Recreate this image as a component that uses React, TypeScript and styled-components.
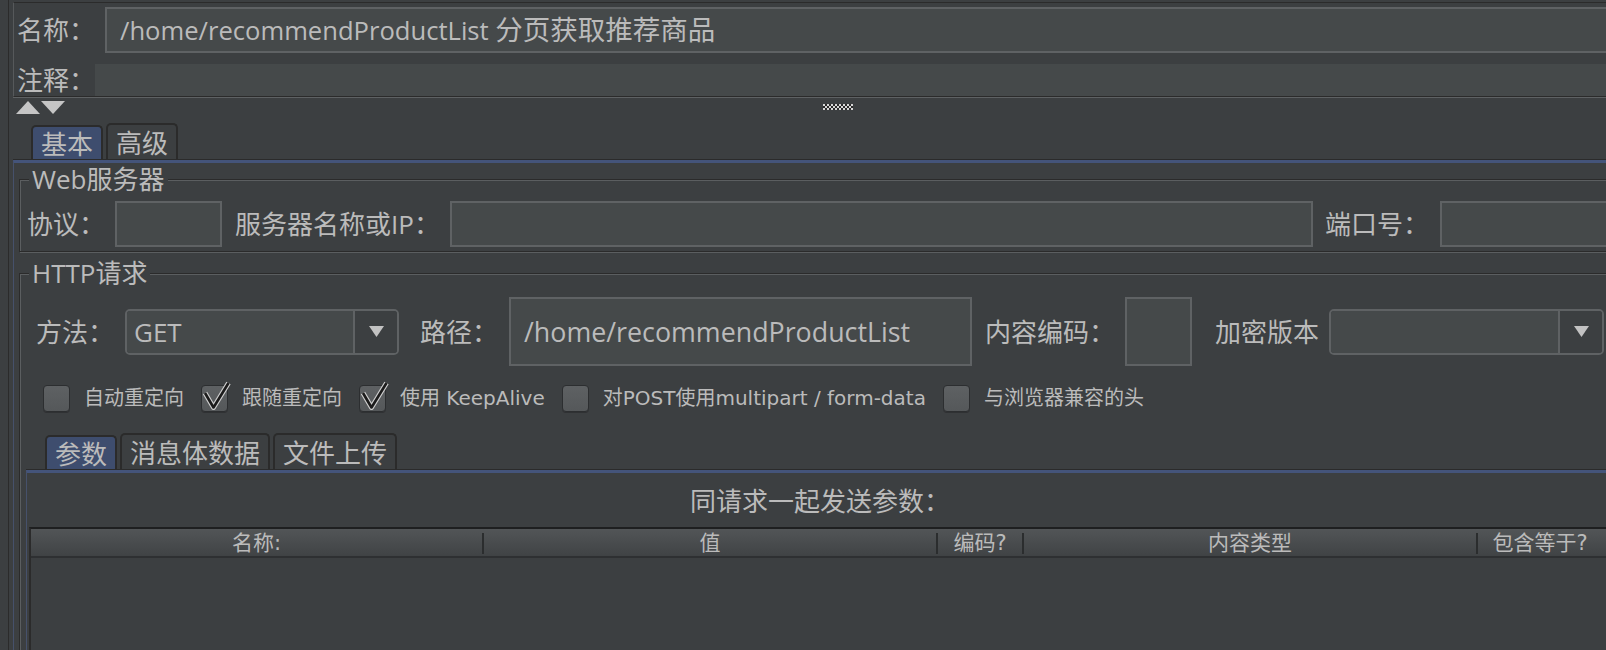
import styled, { createGlobalStyle } from "styled-components";

const GlobalStyle = createGlobalStyle`
  * { box-sizing: border-box; }
  html, body { margin: 0; padding: 0; background: #3c3f41; overflow: hidden; }
  body {
    font-family: "Open Sans", "Noto Sans CJK SC", sans-serif;
    font-size: 26px;
    line-height: 30px;
    color: #bbbbbb;
  }
`;

const Page = styled.div`
  display: flex;
  width: 1606px;
  height: 650px;
  overflow: hidden;
  background: #3c3f41;
`;

const Gutter = styled.div`
  flex: none;
  width: 9px;
  border-right: 1px solid #2b2b2b;
`;

const Main = styled.div`
  flex: none;
  width: 1640px;
  padding-left: 4px;
  display: flex;
  flex-direction: column;
`;

const Header = styled.div`
  margin-top: 2px;
  padding: 4px 0 0 3px;
  border-top: 1px solid #2b2b2b;
  border-left: 1px solid #56595b;
  border-bottom: 1px solid #2b2b2b;
  box-shadow: 0 1px 0 #5e6163;
`;

const Row = styled.div<{ $h: number; $top?: number; $left?: number }>`
  display: flex;
  align-items: center;
  height: ${(p) => p.$h}px;
  margin-top: ${(p) => p.$top ?? 0}px;
  padding-left: ${(p) => p.$left ?? 0}px;
  flex: none;
`;

const Label = styled.span<{ $gap?: number }>`
  flex: none;
  margin-right: ${(p) => p.$gap ?? 10}px;
  white-space: nowrap;
`;

const TextBox = styled.div<{ $w?: number; $h: number; $flat?: boolean; $next?: number; $size?: number }>`
  flex: ${(p) => (p.$w ? "none" : "1")};
  width: ${(p) => (p.$w ? `${p.$w}px` : "auto")};
  height: ${(p) => p.$h}px;
  margin-right: ${(p) => p.$next ?? 0}px;
  padding: 0 ${(p) => (p.$flat ? 0 : 13)}px;
  display: flex;
  align-items: center;
  background: #45494a;
  border: ${(p) => (p.$flat ? "none" : "2px solid #5f6264")};
  font-size: ${(p) => p.$size ?? 26}px;
  white-space: nowrap;
`;

const Wide = styled.span`
  font-size: 27.5px;
`;

const SplitBar = styled.div`
  flex: none;
  display: flex;
  align-items: flex-start;
  height: 24px;
  padding: 4px 0 0 3px;
`;

const Grip = styled.svg`
  margin: 3px 0 0 757px;
`;

const TabStrip = styled.div<{ $h: number; $left: number; $top?: number }>`
  flex: none;
  display: flex;
  align-items: flex-end;
  gap: 3px;
  height: ${(p) => p.$h}px;
  margin-top: ${(p) => p.$top ?? 0}px;
  padding-left: ${(p) => p.$left}px;
`;

const Tab = styled.div<{ $active?: boolean }>`
  height: ${(p) => (p.$active ? 35 : 37)}px;
  padding: 0 8px;
  display: flex;
  align-items: center;
  border: 2px solid #2b2b2b;
  border-bottom: none;
  border-radius: 5px 5px 0 0;
  background: ${(p) => (p.$active ? "#3e4d6e" : "#3c3f41")};
  white-space: nowrap;
`;

const TabPanel = styled.div<{ $left?: number }>`
  flex: 1;
  display: flex;
  flex-direction: column;
  margin-left: ${(p) => p.$left ?? 0}px;
  border-top: 3px solid #44547a;
  border-left: 1px solid #46516b;
  box-shadow: 0 -1px 0 #2b2b2b;
`;

const Group = styled.section<{ $top: number; $grow?: boolean }>`
  margin: ${(p) => p.$top}px 0 0 5px;
  padding-bottom: 4px;
  border: 1px solid #2b2b2b;
  border-right: none;
  box-shadow: inset 1px 1px 0 #5b5e60, 1px 1px 0 #5b5e60;
  display: flex;
  flex-direction: column;
  flex: ${(p) => (p.$grow ? "1" : "none")};
`;

const Legend = styled.div`
  width: fit-content;
  margin: -16px 0 0 9px;
  padding: 0 3px;
  background: #3c3f41;
  line-height: 30px;
`;

const Select = styled.div<{ $w: number; $next?: number }>`
  flex: none;
  display: flex;
  width: ${(p) => p.$w}px;
  height: 46px;
  margin-right: ${(p) => p.$next ?? 0}px;
  border: 2px solid #5f6264;
  border-radius: 5px;
  overflow: hidden;
`;

const SelectValue = styled.div`
  flex: 1;
  display: flex;
  align-items: center;
  padding-left: 7px;
  background: #45494a;
`;

const SelectButton = styled.div`
  flex: none;
  width: 44px;
  display: flex;
  align-items: center;
  justify-content: center;
  border-left: 2px solid #5f6264;
  background: #3c3f41;
`;

const CheckItem = styled.label`
  display: flex;
  align-items: center;
  margin-right: 17px;
  font-family: "DejaVu Sans", "Noto Sans CJK SC", sans-serif;
  font-size: 20px;
  white-space: nowrap;
`;

const Box = styled.span`
  position: relative;
  flex: none;
  width: 27px;
  height: 27px;
  margin-right: 14px;
  border-radius: 4px;
  border: 1px solid #2c2e30;
  background: linear-gradient(#5e6163, #55585a);
  box-shadow: 0 1px 0 #2f3133;
`;

const Tick = styled.svg`
  position: absolute;
  left: -1px;
  top: -7px;
`;

const Caption = styled.div`
  flex: none;
  height: 54px;
  padding: 2px 36px 0 0;
  line-height: 52px;
  text-align: center;
  white-space: nowrap;
`;

const Table = styled.div`
  flex: 1;
  margin-left: 2px;
  border-top: 2px solid #1e1f20;
  border-left: 2px solid #2b2b2b;
  min-height: 200px;
`;

const HeadRow = styled.div`
  display: flex;
  height: 29px;
  border-bottom: 2px solid #2e3032;
  background: linear-gradient(#525557, #404345);
  font-family: "DejaVu Sans", "Noto Sans CJK SC", sans-serif;
  font-size: 21px;
`;

const HeadCell = styled.div<{ $w: number; $last?: boolean }>`
  flex: none;
  width: ${(p) => p.$w}px;
  margin: 4px 0 2px;
  line-height: 21px;
  text-align: center;
  border-right: ${(p) => (p.$last ? "none" : "2px solid #2b2d2e")};
  white-space: nowrap;
`;

const columns = [
  { title: "名称:", w: 453 },
  { title: "值", w: 454 },
  { title: "编码?", w: 86 },
  { title: "内容类型", w: 454 },
  { title: "包含等于?", w: 124 },
];

const options = [
  { label: "自动重定向", on: false },
  { label: "跟随重定向", on: true },
  { label: "使用 KeepAlive", on: true },
  { label: "对POST使用multipart / form-data", on: false },
  { label: "与浏览器兼容的头", on: false },
];

function Arrow() {
  return (
    <svg width="15" height="11" viewBox="0 0 15 11">
      <polygon points="0,0 15,0 7.5,11" fill="#c2c2c2" />
    </svg>
  );
}

function Checkbox({ on }: { on: boolean }) {
  return (
    <Box>
      {on && (
        <Tick width="32" height="36" viewBox="0 0 32 36">
          <polyline points="4,14 12.5,28.5 27.5,4" fill="none" stroke="#cfcfcf" strokeWidth="5" strokeLinejoin="round" />
          <polyline points="4,14 12.5,28.5 27.5,4" fill="none" stroke="#1b1b1b" strokeWidth="2.6" strokeLinejoin="round" />
        </Tick>
      )}
    </Box>
  );
}

function GripDots() {
  const cells = [];
  for (let r = 0; r < 3; r++) {
    for (let c = 0; c < 15; c++) {
      cells.push(
        <rect key={`${r}-${c}`} x={c * 2} y={r * 2} width="2" height="2" fill={(r + c) % 2 === 0 ? "#d6d6d6" : "#2b2b2b"} />
      );
    }
  }
  return (
    <Grip width="30" height="6" viewBox="0 0 30 6">
      {cells}
    </Grip>
  );
}

export default function App() {
  return (
    <Page>
      <GlobalStyle />
      <Gutter />
      <Main>
        <Header>
          <Row $h={46}>
            <Label>名称：</Label>
            <TextBox $h={46} $size={25.6}>
              <span>
                /home/recommendProductList <Wide>分页获取推荐商品</Wide>
              </span>
            </TextBox>
          </Row>
          <Row $h={32} $top={11}>
            <Label $gap={0}>注释：</Label>
            <TextBox $h={32} $flat />
          </Row>
        </Header>

        <SplitBar>
          <svg width="50" height="13" viewBox="0 0 50 13">
            <polygon points="0,13 12,0 24,13" fill="#c5c5c5" />
            <polygon points="25,0 49,0 37,13" fill="#c5c5c5" />
          </svg>
          <GripDots />
        </SplitBar>

        <TabStrip $h={39} $left={18}>
          <Tab $active>基本</Tab>
          <Tab>高级</Tab>
        </TabStrip>

        <TabPanel>
          <Group $top={16}>
            <Legend>Web服务器</Legend>
            <Row $h={46} $top={7} $left={7}>
              <Label>协议：</Label>
              <TextBox $h={46} $w={107} $next={13} />
              <Label>服务器名称或IP：</Label>
              <TextBox $h={46} $w={863} $next={12} />
              <Label $gap={11}>端口号：</Label>
              <TextBox $h={46} />
            </Row>
          </Group>

          <Group $top={21} $grow>
            <Legend>HTTP请求</Legend>
            <Row $h={69} $top={9} $left={16}>
              <Label $gap={11}>方法：</Label>
              <Select $w={274} $next={21}>
                <SelectValue>GET</SelectValue>
                <SelectButton>
                  <Arrow />
                </SelectButton>
              </Select>
              <Label $gap={11}>路径：</Label>
              <TextBox $h={69} $w={463} $next={13} $size={26.8}>
                /home/recommendProductList
              </TextBox>
              <Label>内容编码：</Label>
              <TextBox $h={69} $w={67} $next={23} />
              <Label>加密版本</Label>
              <Select $w={275}>
                <SelectValue />
                <SelectButton>
                  <Arrow />
                </SelectButton>
              </Select>
            </Row>

            <Row $h={28} $top={18} $left={23}>
              {options.map((o) => (
                <CheckItem key={o.label}>
                  <Checkbox on={o.on} />
                  {o.label}
                </CheckItem>
              ))}
            </Row>

            <TabStrip $h={38} $left={25} $top={20}>
              <Tab $active>参数</Tab>
              <Tab>消息体数据</Tab>
              <Tab>文件上传</Tab>
            </TabStrip>

            <TabPanel $left={6}>
              <Caption>同请求一起发送参数：</Caption>
              <Table>
                <HeadRow>
                  {columns.map((c, i) => (
                    <HeadCell key={c.title} $w={c.w} $last={i === columns.length - 1}>
                      {c.title}
                    </HeadCell>
                  ))}
                </HeadRow>
              </Table>
            </TabPanel>
          </Group>
        </TabPanel>
      </Main>
    </Page>
  );
}
